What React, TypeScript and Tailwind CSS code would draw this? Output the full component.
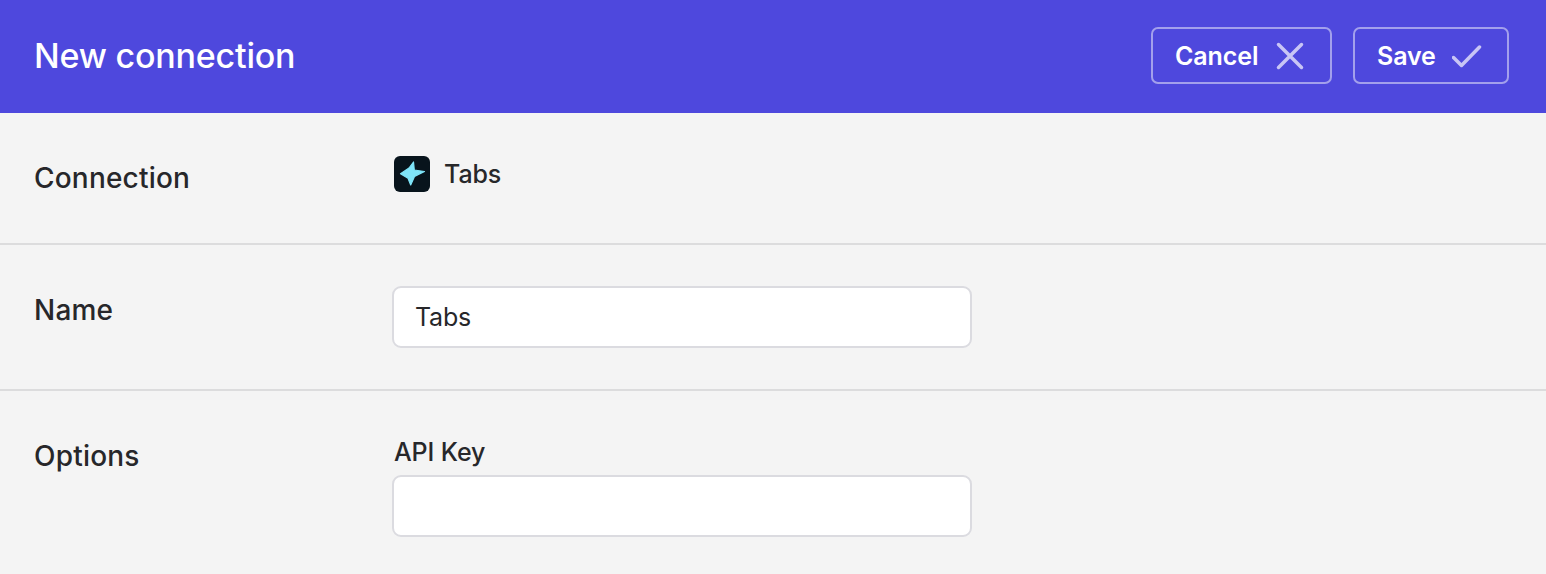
import React from "react";

const font = { fontFamily: "Inter, sans-serif" };

function Row({ label, className, children }: { label: string; className: string; children: React.ReactNode }) {
  return (
    <div className={"flex items-start pl-[34px] " + className}>
      <div className="w-[358px] shrink-0 mt-[47px] text-[28px] leading-[36px] font-medium tracking-[0.2px] text-[#27272a]">
        {label}
      </div>
      <div>{children}</div>
    </div>
  );
}

function Btn({ label, w, pl, gap, children }: { label: string; w: string; pl: string; gap: string; children: React.ReactNode }) {
  return (
    <button className={"h-[57px] rounded-[7px] border-2 border-[#a3a0ec] flex items-center text-white text-[25px] font-semibold tracking-[-0.1px] " + w + " " + pl + " " + gap}>
      <span className="mt-[2px]">{label}</span>
      {children}
    </button>
  );
}

export default function App() {
  return (
    <div className="w-[1546px] h-[574px] overflow-hidden bg-[#f4f4f4] text-[#27272a]" style={font}>
      <header className="h-[113px] bg-[#4e48dd] flex items-start justify-between pl-[34px] pr-[37px]">
        <h1 className="mt-[39px] text-[34px] font-medium text-white leading-[34px] tracking-[-0.2px]">New connection</h1>
        <div className="flex gap-[21px] mt-[27px]">
          <Btn label="Cancel" w="w-[181px]" pl="pl-[22px]" gap="gap-[18px]">
            <svg width="28" height="28" viewBox="0 0 28 28" fill="none" stroke="#c8c5f5" strokeWidth="3.5" strokeLinecap="round">
              <path d="M2.5 2.5 L25.5 25.5 M25.5 2.5 L2.5 25.5" />
            </svg>
          </Btn>
          <Btn label="Save" w="w-[156px]" pl="pl-[22px]" gap="gap-[16px]">
            <svg width="30" height="24" viewBox="0 0 30 24" fill="none" stroke="#c8c5f5" strokeWidth="3.5" strokeLinecap="round" strokeLinejoin="round">
              <path d="M1.5 13.5 L9.5 21.5 L27.5 3" />
            </svg>
          </Btn>
        </div>
      </header>
      <Row label="Connection" className="h-[132px] border-b-2 border-[#dcdcdd]">
        <div className="flex items-center gap-[14px] mt-[43px] ml-[2px]">
          <svg width="36" height="36" viewBox="0 0 36 36">
            <rect width="36" height="36" rx="6" fill="#08141c" />
            <path d="M19.5 6 L20.3 14 L30.5 15.5 L20.5 20.5 L16.7 29 L14 22.3 L6.5 17.7 L15 12 Z" fill="#7fe5f9" stroke="#7fe5f9" strokeWidth="1.2" strokeLinejoin="round" />
          </svg>
          <span className="text-[25px] leading-[36px] font-medium tracking-[-0.1px] text-[#27272a]">Tabs</span>
        </div>
      </Row>
      <Row label="Name" className="h-[146px] border-b-2 border-[#dcdcdd]">
        <input
          readOnly
          value="Tabs"
          className="mt-[41px] block w-[580px] h-[62px] rounded-[9px] border-2 border-[#dbdbe0] bg-white px-[21px] text-[25px] tracking-[-0.2px] text-[#27272a] outline-none"
        />
      </Row>
      <Row label="Options" className="h-[183px]">
        <label className="block mt-[43px] ml-[2px] text-[25px] leading-[36px] font-medium tracking-[-0.1px] text-[#27272a]">API Key</label>
        <input
          readOnly
          className="mt-[5px] block w-[580px] h-[62px] rounded-[9px] border-2 border-[#dbdbe0] bg-white px-[23px] outline-none"
        />
      </Row>
    </div>
  );
}
